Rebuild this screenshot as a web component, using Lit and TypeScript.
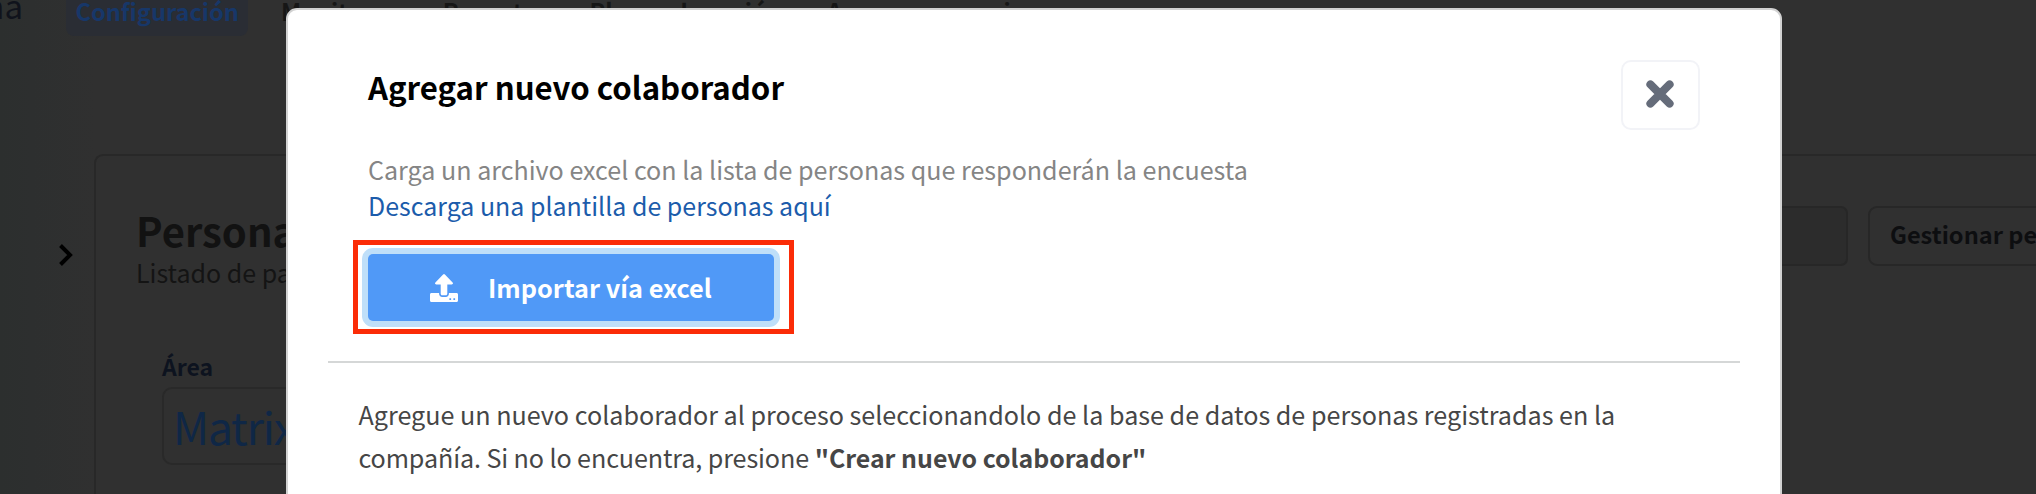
import { LitElement, css, html } from 'lit';
import { customElement, property } from 'lit/decorators.js';

@customElement('people-page')
export class PeoplePage extends LitElement {
  @property({ type: Array }) tabs: string[] = [];
  @property({ type: String }) active = '';

  render() {
    return html`
      <header>
        <span class="brand">na</span>
        <nav>
          ${this.tabs.map(
            (tab) => html`<a class="tab ${tab === this.active ? 'active' : ''}">${tab}</a>`
          )}
        </nav>
      </header>
      <main>
        <aside>
          <svg width="16" height="24" viewBox="0 0 16 24">
            <path d="M3.5 2.5 13 12 3.5 21.5" fill="none" stroke="#000" stroke-width="4" />
          </svg>
        </aside>
        <section class="card">
          <div class="top">
            <div class="titles">
              <h1>Personas</h1>
              <p>Listado de participantes</p>
            </div>
            <div class="search"></div>
            <div class="manage">Gestionar personas</div>
          </div>
          <div class="field">
            <label>Área</label>
            <div class="select">Matrix</div>
          </div>
        </section>
      </main>
    `;
  }

  static styles = css`
    :host {
      display: block;
      height: 494px;
      overflow: hidden;
      background: linear-gradient(90deg, #2c2f2e 0, #2d2f2f 32px, #303030 96px);
    }

    header {
      display: flex;
      height: 36px;
    }

    .brand {
      display: flex;
      justify-content: flex-end;
      width: 23px;
      margin-right: 43px;
      margin-top: -14px;
      font-size: 33px;
      line-height: 39px;
      color: #10131c;
    }

    nav {
      display: flex;
      gap: 23px;
      margin-top: -14px;
    }

    .tab {
      padding: 0 9.5px;
      border-radius: 8px;
      font-size: 23.6px;
      font-weight: 700;
      line-height: 50px;
      height: 50px;
      white-space: nowrap;
      color: #161616;
    }

    .tab:last-child {
      margin-left: 3px;
    }

    .active {
      color: #173769;
      background: #2a2d34;
    }

    main {
      display: flex;
      margin-top: 118px;
      height: 400px;
    }

    aside {
      width: 94px;
      flex: none;
      box-sizing: border-box;
      padding: 89px 0 0 57px;
    }

    .card {
      flex: 1;
      min-width: 0;
      box-sizing: border-box;
      padding: 50px 0 0 40px;
      border: 2px solid #282828;
      border-right: 0;
      border-radius: 9px 0 0 9px;
    }

    .top {
      display: flex;
      height: 141px;
    }

    .titles {
      width: 1264px;
      flex: none;
    }

    h1 {
      margin: 0;
      font-size: 40px;
      line-height: 49px;
      color: #121212;
    }

    p {
      margin: 0;
      font-size: 25px;
      line-height: 34px;
      color: #141414;
    }

    .search,
    .manage {
      box-sizing: border-box;
      flex: none;
      height: 60px;
      border: 2px solid #272727;
      border-radius: 7px;
    }

    .search {
      width: 448px;
      margin-right: 20px;
      background: #2c2c2c;
    }

    .manage {
      padding: 0 20px;
      border-radius: 9px;
      font-size: 23.6px;
      font-weight: 700;
      line-height: 52px;
      white-space: nowrap;
      color: #0d0e10;
    }

    .field {
      padding-left: 26px;
      width: 500px;
    }

    label {
      display: block;
      height: 40px;
      font-size: 23px;
      font-weight: 700;
      line-height: 38px;
      color: #0d131f;
    }

    .select {
      box-sizing: border-box;
      height: 78px;
      padding-left: 9px;
      border: 2px solid #292929;
      border-radius: 10px;
      font-size: 44.5px;
      line-height: 74px;
      letter-spacing: -1.2px;
      color: #0f2746;
    }
  `;
}

@customElement('add-collaborator-modal')
export class AddCollaboratorModal extends LitElement {
  render() {
    return html`
      <div class="heading">
        <h2>Agregar nuevo colaborador</h2>
        <button class="close" aria-label="Cerrar">
          <svg width="28" height="28" viewBox="0 0 28 28">
            <path
              d="M4.4 4.4 23.6 23.6M23.6 4.4 4.4 23.6"
              stroke="#656c7a"
              stroke-width="8"
              stroke-linecap="round"
            />
          </svg>
        </button>
      </div>
      <p class="hint">Carga un archivo excel con la lista de personas que responderán la encuesta</p>
      <a class="template">Descarga una plantilla de personas aquí</a>
      <div class="highlight">
        <button class="import">
          <svg width="28" height="28" viewBox="0 0 28 28">
            <path
              fill="#fff"
              d="M13.1.5a1.3 1.3 0 0 1 1.8 0l7.7 7.9c.8.9.3 2-.9 2h-4.4v9.3c0 .9-.6 1.5-1.5 1.5h-3.6c-.9 0-1.5-.6-1.5-1.5v-9.3H6.3c-1.2 0-1.7-1.1-.9-2z"
            />
            <path
              fill="#fff"
              fill-rule="evenodd"
              d="M1.5 19h7.6v.7c0 1.9 1.3 3.2 3.1 3.2h3.6c1.8 0 3.1-1.3 3.1-3.2V19h7.6c.9 0 1.5.6 1.5 1.5v6c0 .9-.6 1.5-1.5 1.5h-25C.6 28 0 27.4 0 26.5v-6C0 19.6.6 19 1.5 19zM19.4 24.2v1.7h1.7v-1.7zM23.4 24.2v1.7h1.7v-1.7z"
            />
          </svg>
          <span>Importar vía excel</span>
        </button>
      </div>
      <hr />
      <p class="body">
        Agregue un nuevo colaborador al proceso seleccionandolo de la base de datos de personas
        registradas en la
        <span class="tail">compañía. Si no lo encuentra, presione</span>
        <b>"Crear nuevo colaborador"</b>
      </p>
    `;
  }

  static styles = css`
    :host {
      display: block;
      box-sizing: border-box;
      padding: 50px 40px 0;
      border: 2px solid #d2d2d2;
      border-radius: 11px;
      background: #fff;
    }

    .heading {
      display: flex;
      justify-content: space-between;
      height: 91px;
      padding: 0 40px;
    }

    h2 {
      margin: 0;
      font-size: 31.2px;
      line-height: 53px;
      color: #000;
    }

    button {
      display: flex;
      align-items: center;
      box-sizing: border-box;
      font-family: inherit;
    }

    .close {
      justify-content: center;
      width: 79px;
      height: 70px;
      padding: 0 1px 2px 0;
      border: 2px solid #f2f3f7;
      border-radius: 10px;
      background: #fff;
    }

    .hint,
    .template {
      display: block;
      margin: 0 40px;
      font-size: 25.08px;
      line-height: 36px;
    }

    .hint {
      color: #858585;
    }

    .template {
      font-size: 24.97px;
      color: #1c5cab;
    }

    .highlight {
      box-sizing: border-box;
      width: 441px;
      height: 94px;
      margin: 17px 0 0 25px;
      padding: 9px 0 0 10px;
      border: 5px solid #fb2c07;
    }

    .import {
      gap: 30px;
      width: 406px;
      height: 67px;
      padding: 0 0 0 62px;
      border: 0;
      border-radius: 5px;
      background: #5099f7;
      box-shadow: 0 0 0 6px #bfdff9;
      color: #fff;
      font-size: 25.3px;
      font-weight: 700;
      line-height: 34px;
      white-space: nowrap;
    }

    .import span {
      margin-top: -1px;
    }

    hr {
      height: 2px;
      margin: 27px 0 30px;
      border: 0;
      background: #d5d7d7;
    }

    .body {
      width: 1280px;
      margin: 0 0 0 30.5px;
      font-size: 25.14px;
      line-height: 43px;
      color: #464646;
    }

    .tail {
      letter-spacing: -0.11px;
    }

    b {
      font-size: 24.9px;
    }
  `;
}

@customElement('app-root')
export class AppRoot extends LitElement {
  render() {
    return html`
      <people-page
        .tabs=${['Configuración', 'Monitoreo', 'Reportes', 'Planes de acción', 'Accesos y permisos']}
        active="Configuración"
      ></people-page>
      <add-collaborator-modal></add-collaborator-modal>
    `;
  }

  static styles = css`
    :host {
      display: block;
      position: relative;
      height: 494px;
      overflow: hidden;
      font-family: 'Noto Sans CJK SC', 'Noto Sans', sans-serif;
    }

    add-collaborator-modal {
      position: absolute;
      top: 8px;
      left: 286px;
      width: 1496px;
      height: 600px;
    }
  `;
}

declare global {
  interface HTMLElementTagNameMap {
    'people-page': PeoplePage;
    'add-collaborator-modal': AddCollaboratorModal;
    'app-root': AppRoot;
  }
}
